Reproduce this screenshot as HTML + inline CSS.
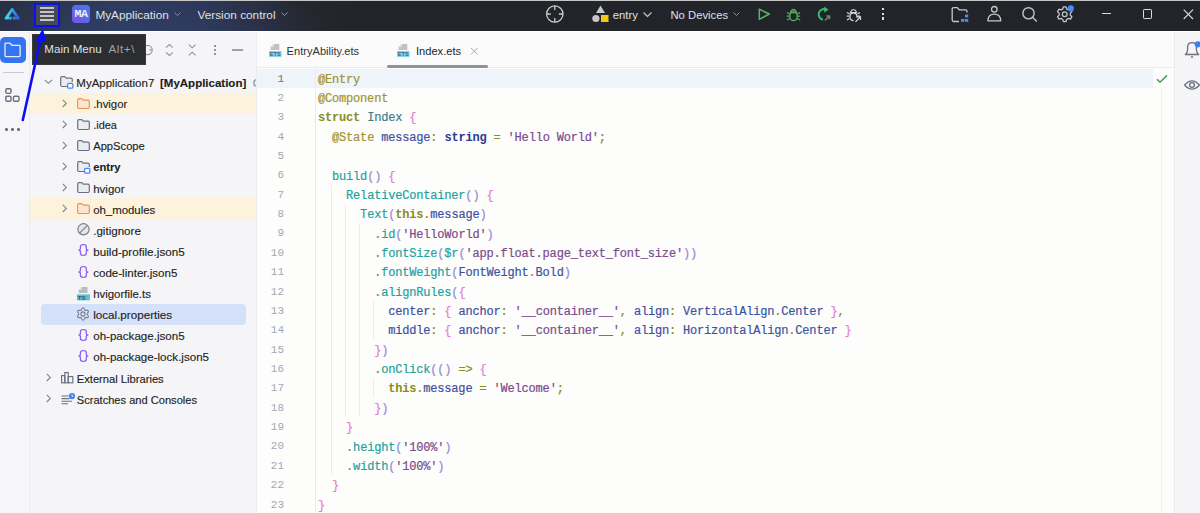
<!DOCTYPE html>
<html><head><meta charset="utf-8">
<style>
*{margin:0;padding:0;box-sizing:border-box}
html,body{width:1200px;height:513px;overflow:hidden;background:#fdfdfc;font-family:"Liberation Sans",sans-serif}
.a{position:absolute}
svg{position:absolute;overflow:visible}
#title{left:0;top:0;width:1200px;height:32.3px;background:#ffffff;border-top:1px solid #c6c6c7}
#tbar{left:0;top:1px;width:1200px;height:30.2px;background:#232429}
#tgrad{left:0;top:1px;width:560px;height:30.2px;background:radial-gradient(ellipse 200px 60px at 130px 34px,rgba(52,68,112,0.55) 0%,rgba(52,68,112,0) 100%),linear-gradient(90deg,#262c3f 0px,#2c3859 110px,#2b3554 200px,#25272f 300px,#232429 360px)}
.tt{position:absolute;color:#dfe1e5;font-size:11.8px;white-space:nowrap;line-height:14px}
#lstrip{left:0;top:32.3px;width:30px;height:481px;background:#f6f6f8;border-right:1px solid #ebecf0}
#proj{left:30px;top:32.3px;width:227px;height:481px;background:#f5f5f7;border-right:1px solid #ebecf0}
#tabs{left:257px;top:32.3px;width:917px;height:35.7px;background:#fbfbfb;border-bottom:1px solid #ebecf0}
#editor{left:257px;top:68px;width:917px;height:445px;background:#fdfdfc}
#rstrip{left:1174px;top:32.3px;width:26px;height:481px;background:#f5f5f7;border-left:1px solid #ebecf0}
.row{position:absolute;left:30px;width:227px;height:21px;font-size:11.3px;color:#1e1f22;white-space:nowrap}
.rt{font-size:11.3px;color:#1e1f22;line-height:14px;white-space:nowrap;-webkit-text-stroke:0.15px}
.rt b{font-weight:bold}
.cl{position:absolute;left:318px;font-family:"Liberation Mono",monospace;font-size:12.0px;white-space:pre;line-height:19.36px;height:19.36px;color:#1e1f22;letter-spacing:-0.185px;-webkit-text-stroke:0.2px}
.ln{position:absolute;left:257px;width:27px;text-align:right;font-family:"Liberation Mono",monospace;font-size:11px;color:#a3a8b5;line-height:19.36px;white-space:pre}
.cl i{font-style:normal}
.dec{color:#9c9433}
.kw{color:#8a8c1a;font-weight:bold;-webkit-text-stroke:0}
.cls{color:#3b7d8c}
.b{color:#e27dd3}
.pa{color:#958ad6}
.fn{color:#23a29c}
.pr{color:#3f4ea2}
.ty{color:#2b3a94;font-weight:bold;-webkit-text-stroke:0}
.op{color:#8c8c1d}
.st{color:#7b4b8c}
.en{color:#3a55a0}
.guide{width:1px;background:#ebecf0}
</style></head><body>
<!-- TITLE BAR -->
<div id="title" class="a"></div>
<div id="tbar" class="a"></div>
<div id="tgrad" class="a"></div>
<!-- logo -->
<svg style="left:0;top:0" width="30" height="30" viewBox="0 0 30 30">
<defs><linearGradient id="lg" x1="0" y1="0" x2="1" y2="0.2"><stop offset="0.3" stop-color="#3cd3e6"/><stop offset="0.5" stop-color="#2fa6e8"/><stop offset="1" stop-color="#2c68df"/></linearGradient></defs>
<path d="M12.2 9.5 L18.4 18.2 L6.0 18.2 Z" fill="none" stroke="url(#lg)" stroke-width="2.8" stroke-linejoin="round"/>
<rect x="11.85" y="15.2" width="0.8" height="5" fill="#232838"/>
</svg>
<!-- menu button -->
<div class="a" style="left:34px;top:3.4px;width:26px;height:24px;border:2px solid #0a10f5;background:#474a53"></div>
<div class="a" style="left:39.5px;top:7.3px;width:14.2px;height:1.6px;background:#c3c5cb"></div>
<div class="a" style="left:39.5px;top:11.4px;width:14.2px;height:1.6px;background:#c3c5cb"></div>
<div class="a" style="left:39.5px;top:15.4px;width:14.2px;height:1.6px;background:#c3c5cb"></div>
<div class="a" style="left:39.5px;top:19.4px;width:14.2px;height:1.6px;background:#c3c5cb"></div>
<!-- MA avatar -->
<div class="a" style="left:72px;top:5.2px;width:17.5px;height:17.5px;border-radius:4px;background:linear-gradient(225deg,#4479f2,#7656e4)"></div>
<div class="a" style="left:72px;top:6.6px;width:17.5px;height:14px;font-family:'Liberation Mono',monospace;font-weight:bold;font-size:11.6px;line-height:14px;text-align:center;letter-spacing:-0.5px;padding-left:0.3px;color:#eef0ff">MA</div>
<div class="tt" style="left:95.4px;top:7.5px">MyApplication</div>
<svg style="left:174px;top:12px" width="7" height="5"><path d="M0.5 0.5 L3.5 3.5 L6.5 0.5" fill="none" stroke="#8d9096" stroke-width="1"/></svg>
<div class="tt" style="left:197.5px;top:7.5px">Version control</div>
<svg style="left:281px;top:12px" width="7" height="5"><path d="M0.5 0.5 L3.5 3.5 L6.5 0.5" fill="none" stroke="#8d9096" stroke-width="1"/></svg>
<!-- crosshair -->
<svg style="left:545px;top:5px" width="20" height="20" viewBox="0 0 20 20"><circle cx="9.8" cy="9" r="8.2" fill="none" stroke="#c9cacd" stroke-width="1.3"/><path d="M9.8 0.8V5M9.8 13V17.2M1.6 9H5.8M13.8 9H18" stroke="#c9cacd" stroke-width="1.3"/></svg>
<!-- entry icon -->
<svg style="left:590px;top:4px" width="22" height="20" viewBox="0 0 22 20"><path d="M6 1.5 L10.5 9 L1.5 9 Z" transform="translate(4.5,0)" fill="#c6c7ca"/><circle cx="5.9" cy="14.5" r="3.6" fill="#c6c7ca"/><rect x="11" y="11" width="7.5" height="7" fill="#f5c518"/></svg>
<div class="tt" style="left:612.8px;top:7.5px;font-size:11.3px">entry</div>
<svg style="left:642.5px;top:12px" width="10" height="6"><path d="M0.5 0.5 L4.5 4.5 L8.5 0.5" fill="none" stroke="#c9cacd" stroke-width="1.1"/></svg>
<div class="tt" style="left:670.5px;top:7.5px;font-size:11.25px">No Devices</div>
<svg style="left:733px;top:12.3px" width="8" height="5"><path d="M0.5 0.5 L3.5 3.5 L6.5 0.5" fill="none" stroke="#8d9096" stroke-width="1"/></svg>
<!-- run -->
<svg style="left:755px;top:5px" width="20" height="20" viewBox="0 0 20 20"><path d="M4.3 4.3 L14.3 9 L4.3 14.4 Z" fill="none" stroke="#55b562" stroke-width="1.5" stroke-linejoin="round"/></svg>
<!-- bug green -->
<svg style="left:784px;top:5px" width="20" height="20" viewBox="0 0 20 20"><g fill="none" stroke="#55b562" stroke-width="1.3"><path d="M6.2 7.5 Q9.5 1.5 12.8 7.5"/><rect x="5.8" y="6.8" width="7.4" height="8.8" rx="3.7"/><path d="M3 7.5L5.6 9M16 7.5L13.4 9M2.8 11.2H5.6M16.2 11.2H13.4M3 15L5.6 13.5M16 15L13.4 13.5M6.2 7.6H12.8"/></g></svg>
<!-- refresh green -->
<svg style="left:814px;top:5px" width="20" height="20" viewBox="0 0 20 20"><path d="M12.6 4.8 A5.3 5.3 0 1 0 9 14.6" fill="none" stroke="#2fbf6a" stroke-width="2"/><path d="M10.2 1.5 L14.5 4.7 L10.2 7.6 Z" fill="#2fbf6a"/><path d="M11 15.5 L15.5 11 M12.2 11 H15.5 V14.3" fill="none" stroke="#77797e" stroke-width="1.6"/></svg>
<!-- bug white -->
<svg style="left:844px;top:5px" width="20" height="20" viewBox="0 0 20 20"><g fill="none" stroke="#d5d6d9" stroke-width="1.2"><path d="M6.2 7.5 Q9.5 1.5 12.8 7.5"/><path d="M12.8 12.5 V10.3 A3.6 3.6 0 0 0 6 10.3 V12 A3.6 3.6 0 0 0 9.5 15.6"/><path d="M3 7.5L5.6 9M16 7.5L13.4 9M2.8 11.2H5.6M16.2 11.2H13.4M3 15L5.6 13.5M6.2 7.6H12.8"/><path d="M11.5 16.8 L16.3 12 M13.2 11.8 H16.5 V15"/></g></svg>
<!-- kebab -->
<div class="a" style="left:882px;top:8.2px;width:2.3px;height:2.3px;background:#dcdddf"></div>
<div class="a" style="left:882px;top:12.8px;width:2.3px;height:2.3px;background:#dcdddf"></div>
<div class="a" style="left:882px;top:17.4px;width:2.3px;height:2.3px;background:#dcdddf"></div>
<!-- right title icons -->
<svg style="left:950px;top:5px" width="20" height="20" viewBox="0 0 20 20"><path d="M9 16.5 H3.6 Q2.2 16.5 2.2 15 V4 Q2.2 2.6 3.6 2.6 H7.2 L9.2 4.8 H15.5 Q17 4.8 17 6.3 V7.5" fill="none" stroke="#c6c7ca" stroke-width="1.3"/><rect x="11" y="14" width="3.4" height="2.8" fill="#4a8cf5"/><rect x="15" y="14" width="3.2" height="2.8" fill="#4a8cf5"/><rect x="15" y="9.6" width="3.2" height="2.8" fill="#4a8cf5"/></svg>
<svg style="left:984px;top:5px" width="20" height="20" viewBox="0 0 20 20"><circle cx="10.3" cy="4.3" r="2.8" fill="none" stroke="#c6c7ca" stroke-width="1.3"/><path d="M3.9 15.8 Q4.2 9.2 10.3 9.2 Q16.4 9.2 16.7 15.8 Z" fill="none" stroke="#c6c7ca" stroke-width="1.3" stroke-linejoin="round"/></svg>
<svg style="left:1018px;top:5px" width="22" height="20" viewBox="0 0 22 20"><circle cx="10.5" cy="8.3" r="5.6" fill="none" stroke="#c6c7ca" stroke-width="1.4"/><path d="M14.5 12.3 L18.8 16.5" stroke="#c6c7ca" stroke-width="1.4"/></svg>
<svg style="left:1055px;top:4px" width="22" height="20" viewBox="0 0 22 20"><path d="M8.3 2.8 H11.1 L11.6 4.9 L13.4 5.9 L15.5 5.2 L16.9 7.6 L15.3 9.2 V11.2 L16.9 12.7 L15.5 15.1 L13.4 14.4 L11.6 15.5 L11.1 17.6 H8.3 L7.8 15.5 L6 14.4 L3.9 15.1 L2.5 12.7 L4.1 11.2 V9.2 L2.5 7.6 L3.9 5.2 L6 5.9 L7.8 4.9 Z" fill="none" stroke="#c6c7ca" stroke-width="1.25" stroke-linejoin="round"/><circle cx="9.7" cy="10.2" r="2.4" fill="none" stroke="#c6c7ca" stroke-width="1.25"/><circle cx="15.8" cy="4.4" r="3.1" fill="#4a8cf5"/></svg>
<div class="a" style="left:1101.5px;top:12.8px;width:9px;height:1.1px;background:#dcdddf"></div>
<div class="a" style="left:1143px;top:9.4px;width:9.2px;height:9.2px;border:1.1px solid #dcdddf;border-radius:1.2px"></div>
<svg style="left:1183px;top:8.5px" width="11" height="11" viewBox="0 0 11 11"><path d="M0.7 0.7 L10 10 M10 0.7 L0.7 10" stroke="#dcdddf" stroke-width="1.1"/></svg>

<!-- PANELS -->
<div id="lstrip" class="a"></div>
<div id="proj" class="a"></div>
<div id="tabs" class="a"></div>
<div id="editor" class="a"></div>
<div id="rstrip" class="a"></div>

<!-- left strip -->
<div class="a" style="left:0;top:36.7px;width:25.7px;height:26.2px;border-radius:5px;background:#3574f0"></div>
<svg style="left:0;top:36px" width="26" height="28" viewBox="0 0 26 28"><path d="M5 8 Q5 7.2 5.8 7.2 H10 L12 9.3 H19.3 Q20.1 9.3 20.1 10.1 V19.8 Q20.1 20.6 19.3 20.6 H5.8 Q5 20.6 5 19.8 Z" fill="none" stroke="#e6edfd" stroke-width="1.3"/></svg>
<div class="a" style="left:2.5px;top:72px;width:21px;height:1px;background:#c9cbd0"></div>
<svg style="left:0;top:84px" width="26" height="22" viewBox="0 0 26 22"><g fill="none" stroke="#6c707e" stroke-width="1.4"><rect x="5.8" y="4.8" width="5.2" height="4.6" rx="1.3"/><rect x="5.8" y="12.3" width="5.2" height="5" rx="1.3"/><rect x="13.4" y="12.3" width="5.6" height="5" rx="1.3"/></g></svg>
<div class="a" style="left:5.0px;top:128.4px;width:2.7px;height:2.7px;border-radius:50%;background:#6c707e"></div>
<div class="a" style="left:11.0px;top:128.4px;width:2.7px;height:2.7px;border-radius:50%;background:#6c707e"></div>
<div class="a" style="left:17.0px;top:128.4px;width:2.7px;height:2.7px;border-radius:50%;background:#6c707e"></div>

<!-- project header icons -->
<svg style="left:140px;top:40px" width="20" height="20" viewBox="0 0 20 20"><circle cx="7.6" cy="10" r="4.6" fill="none" stroke="#8f939d" stroke-width="1.1"/><path d="M9.2 10H12.4" stroke="#8f939d" stroke-width="1.1"/></svg>
<svg style="left:162px;top:40px" width="16" height="20" viewBox="0 0 16 20"><path d="M4 7.6 L7.4 4.6 L10.8 7.6 M4 12.4 L7.4 15.4 L10.8 12.4" fill="none" stroke="#8f939d" stroke-width="1.1"/></svg>
<svg style="left:185px;top:40px" width="16" height="20" viewBox="0 0 16 20"><path d="M3.8 4.6 L7.2 7.8 L10.6 4.6 M3.8 15.4 L7.2 12.2 L10.6 15.4" fill="none" stroke="#8f939d" stroke-width="1.1"/></svg>
<div class="a" style="left:214.1px;top:44.8px;width:1.9px;height:1.9px;background:#8f939d"></div>
<div class="a" style="left:214.1px;top:49.1px;width:1.9px;height:1.9px;background:#8f939d"></div>
<div class="a" style="left:214.1px;top:53.3px;width:1.9px;height:1.9px;background:#8f939d"></div>
<div class="a" style="left:232.4px;top:49.4px;width:11.1px;height:1.3px;background:#9da1aa"></div>

<!-- TREE -->
<svg style="left:44.3px;top:79.0px" width="9" height="6" viewBox="0 0 9 6"><path d="M0.8 0.8 L4.4 4.3 L8 0.8" fill="none" stroke="#80848e" stroke-width="1.15"/></svg>
<svg style="left:60px;top:76.3px" width="16" height="14" viewBox="0 0 16 14"><path d="M7 10.5 H1.9 Q0.7 10.5 0.7 9.3 V1.9 Q0.7 0.7 1.9 0.7 H4.8 L6.2 2.2 H11.1 Q12.3 2.2 12.3 3.4 V6" fill="#ebecf0" stroke="#6c707e" stroke-width="1.2" stroke-linejoin="round"/><rect x="7.6" y="7.3" width="5.3" height="4.9" rx="1.2" fill="#fff" stroke="#4b87f6" stroke-width="1.3"/></svg>
<div class="a rt" style="left:76.3px;top:76.00px;font-size:11.5px">MyApplication7</div>
<div class="a rt" style="left:160px;top:76.00px;font-size:11.5px;font-weight:bold">[MyApplication]</div>
<div class="a rt" style="left:252.7px;top:76.00px;width:3.5px;overflow:hidden;color:#8c8f96">C:</div>
<div class="a" style="left:30px;top:92.61px;width:226px;height:21.1px;background:#fdf3dc"></div>
<svg style="left:61.8px;top:98.61px" width="6" height="9" viewBox="0 0 6 9"><path d="M0.8 0.8 L4.3 4.4 L0.8 8" fill="none" stroke="#80848e" stroke-width="1.15"/></svg>
<svg style="left:77px;top:97.61px" width="14" height="12" viewBox="0 0 14 12"><path d="M0.7 1.9 Q0.7 0.7 1.9 0.7 H4.8 L6.2 2.2 H11.1 Q12.3 2.2 12.3 3.4 V9.3 Q12.3 10.5 11.1 10.5 H1.9 Q0.7 10.5 0.7 9.3 Z" fill="#fce5d3" stroke="#e9925a" stroke-width="1.2" stroke-linejoin="round"/></svg>
<div class="a rt" style="left:93.2px;top:97.11px;font-size:11.36px">.hvigor</div>
<svg style="left:61.8px;top:119.72px" width="6" height="9" viewBox="0 0 6 9"><path d="M0.8 0.8 L4.3 4.4 L0.8 8" fill="none" stroke="#80848e" stroke-width="1.15"/></svg>
<svg style="left:77px;top:118.72px" width="14" height="12" viewBox="0 0 14 12"><path d="M0.7 1.9 Q0.7 0.7 1.9 0.7 H4.8 L6.2 2.2 H11.1 Q12.3 2.2 12.3 3.4 V9.3 Q12.3 10.5 11.1 10.5 H1.9 Q0.7 10.5 0.7 9.3 Z" fill="#ebecf0" stroke="#6c707e" stroke-width="1.2" stroke-linejoin="round"/></svg>
<div class="a rt" style="left:93.2px;top:118.22px;font-size:10.9px">.idea</div>
<svg style="left:61.8px;top:140.82999999999998px" width="6" height="9" viewBox="0 0 6 9"><path d="M0.8 0.8 L4.3 4.4 L0.8 8" fill="none" stroke="#80848e" stroke-width="1.15"/></svg>
<svg style="left:77px;top:139.82999999999998px" width="14" height="12" viewBox="0 0 14 12"><path d="M0.7 1.9 Q0.7 0.7 1.9 0.7 H4.8 L6.2 2.2 H11.1 Q12.3 2.2 12.3 3.4 V9.3 Q12.3 10.5 11.1 10.5 H1.9 Q0.7 10.5 0.7 9.3 Z" fill="#ebecf0" stroke="#6c707e" stroke-width="1.2" stroke-linejoin="round"/></svg>
<div class="a rt" style="left:93.2px;top:139.33px;font-size:11.2px">AppScope</div>
<svg style="left:61.8px;top:161.94px" width="6" height="9" viewBox="0 0 6 9"><path d="M0.8 0.8 L4.3 4.4 L0.8 8" fill="none" stroke="#80848e" stroke-width="1.15"/></svg>
<svg style="left:77px;top:160.74px" width="16" height="14" viewBox="0 0 16 14"><path d="M7 10.5 H1.9 Q0.7 10.5 0.7 9.3 V1.9 Q0.7 0.7 1.9 0.7 H4.8 L6.2 2.2 H11.1 Q12.3 2.2 12.3 3.4 V6" fill="#ebecf0" stroke="#6c707e" stroke-width="1.2" stroke-linejoin="round"/><rect x="7.6" y="7.3" width="5.3" height="4.9" rx="1.2" fill="#fff" stroke="#4b87f6" stroke-width="1.3"/></svg>
<div class="a rt" style="left:93.2px;top:160.44px;font-size:11.2px"><b>entry</b></div>
<svg style="left:61.8px;top:183.05px" width="6" height="9" viewBox="0 0 6 9"><path d="M0.8 0.8 L4.3 4.4 L0.8 8" fill="none" stroke="#80848e" stroke-width="1.15"/></svg>
<svg style="left:77px;top:182.05px" width="14" height="12" viewBox="0 0 14 12"><path d="M0.7 1.9 Q0.7 0.7 1.9 0.7 H4.8 L6.2 2.2 H11.1 Q12.3 2.2 12.3 3.4 V9.3 Q12.3 10.5 11.1 10.5 H1.9 Q0.7 10.5 0.7 9.3 Z" fill="#ebecf0" stroke="#6c707e" stroke-width="1.2" stroke-linejoin="round"/></svg>
<div class="a rt" style="left:93.2px;top:181.55px;font-size:11.5px">hvigor</div>
<div class="a" style="left:30px;top:198.16px;width:226px;height:21.1px;background:#fdf3dc"></div>
<svg style="left:61.8px;top:204.16px" width="6" height="9" viewBox="0 0 6 9"><path d="M0.8 0.8 L4.3 4.4 L0.8 8" fill="none" stroke="#80848e" stroke-width="1.15"/></svg>
<svg style="left:77px;top:203.16px" width="14" height="12" viewBox="0 0 14 12"><path d="M0.7 1.9 Q0.7 0.7 1.9 0.7 H4.8 L6.2 2.2 H11.1 Q12.3 2.2 12.3 3.4 V9.3 Q12.3 10.5 11.1 10.5 H1.9 Q0.7 10.5 0.7 9.3 Z" fill="#fce5d3" stroke="#e9925a" stroke-width="1.2" stroke-linejoin="round"/></svg>
<div class="a rt" style="left:93.2px;top:202.66px;font-size:11.4px">oh_modules</div>
<svg style="left:77px;top:223.46999999999997px" width="14" height="14" viewBox="0 0 14 14"><circle cx="6.5" cy="6.3" r="5.6" fill="#e6e7ea" stroke="#7d818b" stroke-width="1.2"/><path d="M10.4 2.4 L2.6 10.2" stroke="#7d818b" stroke-width="1.2"/></svg>
<div class="a rt" style="left:93.2px;top:223.77px;font-size:11.6px">.gitignore</div>
<svg style="left:78px;top:244.48px" width="12" height="12" viewBox="0 0 12 12"><g fill="none" stroke="#8a60f2" stroke-width="1.3" stroke-linecap="round"><path d="M5 0.7 Q2.4 0.7 2.4 2.8 V4.7 Q2.4 6 0.5 6 Q2.4 6 2.4 7.3 V9.3 Q2.4 11.4 5 11.4"/><path d="M5.9 0.7 Q8.3 0.7 8.3 2.8 V4.7 Q8.3 6 10.3 6 Q8.3 6 8.3 7.3 V9.3 Q8.3 11.4 5.9 11.4"/></g></svg>
<div class="a rt" style="left:93.2px;top:244.88px;font-size:11.7px">build-profile.json5</div>
<svg style="left:78px;top:265.59000000000003px" width="12" height="12" viewBox="0 0 12 12"><g fill="none" stroke="#8a60f2" stroke-width="1.3" stroke-linecap="round"><path d="M5 0.7 Q2.4 0.7 2.4 2.8 V4.7 Q2.4 6 0.5 6 Q2.4 6 2.4 7.3 V9.3 Q2.4 11.4 5 11.4"/><path d="M5.9 0.7 Q8.3 0.7 8.3 2.8 V4.7 Q8.3 6 10.3 6 Q8.3 6 8.3 7.3 V9.3 Q8.3 11.4 5.9 11.4"/></g></svg>
<div class="a rt" style="left:93.2px;top:265.99px;font-size:11.57px">code-linter.json5</div>
<svg style="left:77.2px;top:286.5px" width="14" height="14" viewBox="0 0 14 14"><path d="M4.6 0 H10.5 V5.9 H1.6 V3.1 Z" fill="#b9bdc3"/><path d="M4.6 0 V3.1 H1.6 Z" fill="#e3e5e8"/><rect x="0" y="7.4" width="12.9" height="5.9" fill="#5bbfd6"/><text x="4.6" y="12.6" font-family="Liberation Sans" font-size="6.2" font-weight="bold" fill="#2e5e70" text-anchor="middle">TS</text></svg>
<div class="a rt" style="left:93.2px;top:287.10px;font-size:11.41px">hvigorfile.ts</div>
<div class="a" style="left:41px;top:303.61px;width:205.2px;height:21px;border-radius:4px;background:#d5e0fb"></div>
<svg style="left:76.4px;top:306.85999999999996px" width="14" height="14" viewBox="0 0 14 14"><path d="M11.20 7.00 L11.31 7.38 L11.60 7.81 L11.97 8.33 L12.29 8.92 L12.41 9.52 L12.28 10.05 L11.89 10.43 L11.31 10.62 L10.64 10.64 L10.01 10.58 L9.48 10.54 L9.10 10.64 L8.83 10.92 L8.60 11.39 L8.33 11.97 L7.98 12.54 L7.52 12.95 L7.00 13.10 L6.48 12.95 L6.02 12.54 L5.67 11.97 L5.40 11.39 L5.17 10.92 L4.90 10.64 L4.52 10.54 L3.99 10.58 L3.36 10.64 L2.69 10.62 L2.11 10.43 L1.72 10.05 L1.59 9.52 L1.71 8.92 L2.03 8.33 L2.40 7.81 L2.69 7.38 L2.80 7.00 L2.69 6.62 L2.40 6.19 L2.03 5.67 L1.71 5.08 L1.59 4.48 L1.72 3.95 L2.11 3.57 L2.69 3.38 L3.36 3.36 L3.99 3.42 L4.52 3.46 L4.90 3.36 L5.17 3.08 L5.40 2.61 L5.67 2.03 L6.02 1.46 L6.48 1.05 L7.00 0.90 L7.52 1.05 L7.98 1.46 L8.33 2.03 L8.60 2.61 L8.83 3.08 L9.10 3.36 L9.48 3.46 L10.01 3.42 L10.64 3.36 L11.31 3.38 L11.89 3.57 L12.28 3.95 L12.41 4.48 L12.29 5.08 L11.97 5.67 L11.60 6.19 L11.31 6.62 Z" fill="none" stroke="#7d818b" stroke-width="1.1" stroke-linejoin="round"/><circle cx="7" cy="7" r="2.1" fill="none" stroke="#7d818b" stroke-width="1.1"/></svg>
<div class="a rt" style="left:93.2px;top:308.21px;font-size:11.65px">local.properties</div>
<svg style="left:78px;top:328.92px" width="12" height="12" viewBox="0 0 12 12"><g fill="none" stroke="#8a60f2" stroke-width="1.3" stroke-linecap="round"><path d="M5 0.7 Q2.4 0.7 2.4 2.8 V4.7 Q2.4 6 0.5 6 Q2.4 6 2.4 7.3 V9.3 Q2.4 11.4 5 11.4"/><path d="M5.9 0.7 Q8.3 0.7 8.3 2.8 V4.7 Q8.3 6 10.3 6 Q8.3 6 8.3 7.3 V9.3 Q8.3 11.4 5.9 11.4"/></g></svg>
<div class="a rt" style="left:93.2px;top:329.32px;font-size:11.58px">oh-package.json5</div>
<svg style="left:78px;top:350.03000000000003px" width="12" height="12" viewBox="0 0 12 12"><g fill="none" stroke="#8a60f2" stroke-width="1.3" stroke-linecap="round"><path d="M5 0.7 Q2.4 0.7 2.4 2.8 V4.7 Q2.4 6 0.5 6 Q2.4 6 2.4 7.3 V9.3 Q2.4 11.4 5 11.4"/><path d="M5.9 0.7 Q8.3 0.7 8.3 2.8 V4.7 Q8.3 6 10.3 6 Q8.3 6 8.3 7.3 V9.3 Q8.3 11.4 5.9 11.4"/></g></svg>
<div class="a rt" style="left:93.2px;top:350.43px;font-size:11.58px">oh-package-lock.json5</div>
<svg style="left:46px;top:373.03999999999996px" width="6" height="9" viewBox="0 0 6 9"><path d="M0.8 0.8 L4.3 4.4 L0.8 8" fill="none" stroke="#80848e" stroke-width="1.15"/></svg>
<svg style="left:60.8px;top:371.53999999999996px" width="14" height="12" viewBox="0 0 14 12"><g fill="none" stroke="#6c707e" stroke-width="1.15"><rect x="0.6" y="3.6" width="3.2" height="7.2"/><rect x="3.8" y="0.6" width="3.4" height="10.2"/><rect x="7.2" y="4.6" width="4.6" height="6.2"/></g></svg>
<div class="a rt" style="left:76.75px;top:371.54px;font-size:11.18px">External Libraries</div>
<svg style="left:46px;top:394.15px" width="6" height="9" viewBox="0 0 6 9"><path d="M0.8 0.8 L4.3 4.4 L0.8 8" fill="none" stroke="#80848e" stroke-width="1.15"/></svg>
<svg style="left:60.8px;top:392.65px" width="15" height="12" viewBox="0 0 15 12"><g stroke="#6c707e" stroke-width="1.1"><path d="M0.5 3H7.5M0.5 5.6H8.5M0.5 8.2H11M0.5 10.8H7"/></g><circle cx="11" cy="3.1" r="3.1" fill="#3d7ff5"/><path d="M11 1.5 V3.3 H12.3" stroke="#fff" stroke-width="0.9" fill="none"/></svg>
<div class="a rt" style="left:76.75px;top:392.65px;font-size:11.1px">Scratches and Consoles</div>

<!-- TABS -->
<svg style="left:268.7px;top:43.9px" width="13" height="14" viewBox="0 0 13 14"><path d="M4.6 0 H10.3 V5.9 H1.5 V3.1 Z" fill="#bfc3c9"/><path d="M4.6 0 V3.1 H1.5 Z" fill="#e3e5e8"/><rect x="0" y="7" width="12.5" height="6.1" fill="#8cd3ec"/><text x="6.25" y="12.3" font-family="Liberation Sans" font-size="6.2" font-weight="bold" fill="#2f6c82" text-anchor="middle" textLength="11" lengthAdjust="spacingAndGlyphs">ETS</text></svg>
<div class="a" style="left:286.6px;top:43.6px;font-size:11.1px;color:#30323a;line-height:14px;white-space:nowrap">EntryAbility.ets</div>
<svg style="left:397.4px;top:43.9px" width="13" height="14" viewBox="0 0 13 14"><path d="M4.6 0 H10.3 V5.9 H1.5 V3.1 Z" fill="#bfc3c9"/><path d="M4.6 0 V3.1 H1.5 Z" fill="#e3e5e8"/><rect x="0" y="7" width="12.5" height="6.1" fill="#8cd3ec"/><text x="6.25" y="12.3" font-family="Liberation Sans" font-size="6.2" font-weight="bold" fill="#2f6c82" text-anchor="middle" textLength="11" lengthAdjust="spacingAndGlyphs">ETS</text></svg>
<div class="a" style="left:416px;top:43.6px;font-size:11.1px;color:#1e1f22;line-height:14px;white-space:nowrap">Index.ets</div>
<svg style="left:470px;top:46.5px" width="9" height="9" viewBox="0 0 9 9"><path d="M1 1 L7.5 7.5 M7.5 1 L1 7.5" stroke="#a8abb2" stroke-width="1"/></svg>
<div class="a" style="left:386.6px;top:64.8px;width:101.4px;height:3px;border-radius:1.5px;background:#8d919a"></div>

<!-- EDITOR -->
<div class="a" style="left:257px;top:68.5px;width:896px;height:19.4px;background:#eff3fa"></div>
<div class="a" style="left:314.6px;top:68px;width:1px;height:445px;background:#ebecf0"></div>
<div class="a" style="left:1161px;top:88px;width:1px;height:425px;background:#eeeff2"></div>
<div class="a" style="left:1153px;top:70.5px;width:19px;height:17px;border-radius:3px;background:#fdfdfd"></div>
<svg style="left:1155px;top:73px" width="14" height="12" viewBox="0 0 14 12"><path d="M2 6.2 L5 9.2 L12 2.4" fill="none" stroke="#4e9e5c" stroke-width="1.6"/></svg>
<div class="a guide" style="left:330.5px;top:184.7px;height:290.4px"></div>
<div class="a guide" style="left:344.5px;top:204.0px;height:213.0px"></div>
<div class="a guide" style="left:358.5px;top:223.4px;height:193.6px"></div>
<div class="a guide" style="left:372.5px;top:300.8px;height:38.7px"></div>
<div class="a guide" style="left:372.5px;top:378.3px;height:19.4px"></div>
<div class="cl" style="top:70.70px"><i class="dec">@Entry</i></div>
<div class="ln" style="top:69.60px;color:#6f737a">1</div>
<div class="cl" style="top:90.06px"><i class="dec">@Component</i></div>
<div class="ln" style="top:88.96px">2</div>
<div class="cl" style="top:109.42px"><i class="kw">struct</i> <i class="cls">Index</i> <i class="b">{</i></div>
<div class="ln" style="top:108.32px">3</div>
<div class="cl" style="top:128.78px">  <i class="dec">@State</i> <i class="pr">message</i><i class="op">:</i> <i class="ty">string</i> <i class="op">=</i> <i class="st">'Hello World'</i><i class="op">;</i></div>
<div class="ln" style="top:127.68px">4</div>
<div class="cl" style="top:148.14px"></div>
<div class="ln" style="top:147.04px">5</div>
<div class="cl" style="top:167.50px">  <i class="fn">build</i><i class="pa">()</i> <i class="b">{</i></div>
<div class="ln" style="top:166.40px">6</div>
<div class="cl" style="top:186.86px">    <i class="fn">RelativeContainer</i><i class="pa">()</i> <i class="b">{</i></div>
<div class="ln" style="top:185.76px">7</div>
<div class="cl" style="top:206.22px">      <i class="fn">Text</i><i class="pa">(</i><i class="kw">this</i><i class="op">.</i><i class="pr">message</i><i class="pa">)</i></div>
<div class="ln" style="top:205.12px">8</div>
<div class="cl" style="top:225.58px">        <i class="op">.</i><i class="fn">id</i><i class="pa">(</i><i class="st">'HelloWorld'</i><i class="pa">)</i></div>
<div class="ln" style="top:224.48px">9</div>
<div class="cl" style="top:244.94px">        <i class="op">.</i><i class="fn">fontSize</i><i class="pa">(</i><i class="fn">$r</i><i class="pa">(</i><i class="st">'app.float.page_text_font_size'</i><i class="pa">))</i></div>
<div class="ln" style="top:243.84px">10</div>
<div class="cl" style="top:264.30px">        <i class="op">.</i><i class="fn">fontWeight</i><i class="pa">(</i><i class="en">FontWeight</i><i class="op">.</i><i class="en">Bold</i><i class="pa">)</i></div>
<div class="ln" style="top:263.20px">11</div>
<div class="cl" style="top:283.66px">        <i class="op">.</i><i class="fn">alignRules</i><i class="pa">(</i><i class="b">{</i></div>
<div class="ln" style="top:282.56px">12</div>
<div class="cl" style="top:303.02px">          <i class="pr">center</i><i class="op">:</i> <i class="b">{</i> <i class="pr">anchor</i><i class="op">:</i> <i class="st">'__container__'</i><i class="op">,</i> <i class="pr">align</i><i class="op">:</i> <i class="en">VerticalAlign</i><i class="op">.</i><i class="en">Center</i> <i class="b">}</i><i class="op">,</i></div>
<div class="ln" style="top:301.92px">13</div>
<div class="cl" style="top:322.38px">          <i class="pr">middle</i><i class="op">:</i> <i class="b">{</i> <i class="pr">anchor</i><i class="op">:</i> <i class="st">'__container__'</i><i class="op">,</i> <i class="pr">align</i><i class="op">:</i> <i class="en">HorizontalAlign</i><i class="op">.</i><i class="en">Center</i> <i class="b">}</i></div>
<div class="ln" style="top:321.28px">14</div>
<div class="cl" style="top:341.74px">        <i class="b">}</i><i class="pa">)</i></div>
<div class="ln" style="top:340.64px">15</div>
<div class="cl" style="top:361.10px">        <i class="op">.</i><i class="fn">onClick</i><i class="pa">(()</i> <i class="op">=&gt;</i> <i class="b">{</i></div>
<div class="ln" style="top:360.00px">16</div>
<div class="cl" style="top:380.46px">          <i class="kw">this</i><i class="op">.</i><i class="pr">message</i> <i class="op">=</i> <i class="st">'Welcome'</i><i class="op">;</i></div>
<div class="ln" style="top:379.36px">17</div>
<div class="cl" style="top:399.82px">        <i class="b">}</i><i class="pa">)</i></div>
<div class="ln" style="top:398.72px">18</div>
<div class="cl" style="top:419.18px">    <i class="b">}</i></div>
<div class="ln" style="top:418.08px">19</div>
<div class="cl" style="top:438.54px">    <i class="op">.</i><i class="fn">height</i><i class="pa">(</i><i class="st">'100%'</i><i class="pa">)</i></div>
<div class="ln" style="top:437.44px">20</div>
<div class="cl" style="top:457.90px">    <i class="op">.</i><i class="fn">width</i><i class="pa">(</i><i class="st">'100%'</i><i class="pa">)</i></div>
<div class="ln" style="top:456.80px">21</div>
<div class="cl" style="top:477.26px">  <i class="b">}</i></div>
<div class="ln" style="top:476.16px">22</div>
<div class="cl" style="top:496.62px"><i class="b">}</i></div>
<div class="ln" style="top:495.52px">23</div>

<!-- right strip icons -->
<svg style="left:1180px;top:38px" width="22" height="22" viewBox="0 0 22 22"><path d="M5.4 16.5 Q7.6 14.8 7.6 11.5 V9.3 Q7.6 4.6 12 4.6 Q16.4 4.6 16.4 9.3 V11.5 Q16.4 14.8 18.6 16.5 Z" fill="none" stroke="#6c707e" stroke-width="1.3" stroke-linejoin="round"/><path d="M10.9 19 H13.1" stroke="#6c707e" stroke-width="1.5"/><circle cx="17.8" cy="6.3" r="3.1" fill="#3d7ff5"/></svg>
<svg style="left:1180px;top:76px" width="22" height="18" viewBox="0 0 22 18"><path d="M4.6 9 Q12 0.8 19.4 9 Q12 17.2 4.6 9 Z" fill="none" stroke="#6c707e" stroke-width="1.3"/><circle cx="12" cy="9" r="2.4" fill="none" stroke="#6c707e" stroke-width="1.3"/></svg>

<!-- TOOLTIP -->
<div class="a" style="left:32.2px;top:33.5px;width:113.8px;height:31.4px;background:#2b2d30;border:1px solid #393b40"></div>
<div class="a" style="left:44.3px;top:41.9px;font-size:11.6px;color:#dfe1e5;line-height:14px;white-space:nowrap">Main Menu</div>
<div class="a" style="left:108.5px;top:41.9px;font-size:11.6px;color:#a0a3a9;line-height:14px;white-space:nowrap;letter-spacing:0.6px">Alt+\</div>

<!-- ARROW -->
<svg style="left:0;top:0" width="80" height="130" viewBox="0 0 80 130"><path d="M22.8 120 L40 42" stroke="#0a10f5" stroke-width="2.6" stroke-linecap="round"/><path d="M42.8 28.5 L46.6 42 L35.4 41.4 Z" fill="#0a10f5"/></svg>
</body></html>
